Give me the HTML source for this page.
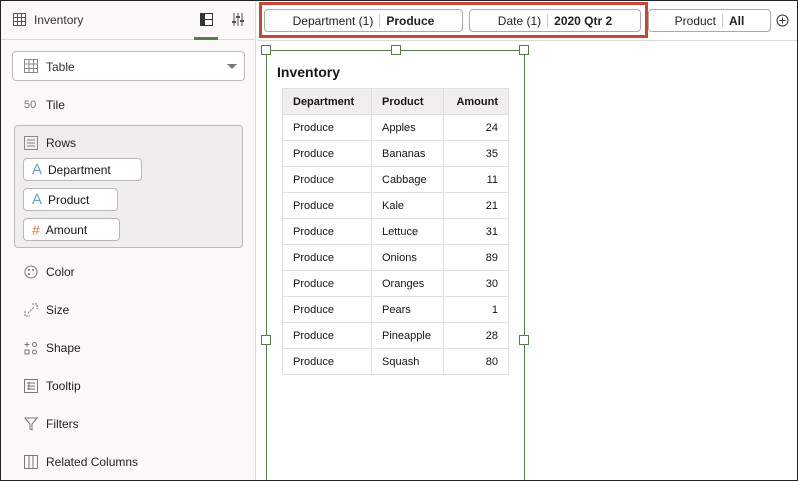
<!DOCTYPE html>
<html><head><style>
*{margin:0;padding:0;box-sizing:border-box}
body{width:798px;height:481px;overflow:hidden;font-family:"Liberation Sans",sans-serif;font-size:12px;color:#161513;background:#fff;position:relative}
.frame{position:absolute;left:0;top:0;width:798px;height:481px;border:1px solid #222;z-index:50;pointer-events:none}
.left{position:absolute;left:0;top:0;width:256px;height:481px;background:#fbf9f8;border-right:1px solid #dcdad8}
.a{position:absolute}
.hdr{position:absolute;left:0;top:0;width:256px;height:40px;border-bottom:1px solid #dcdad8}
.item{position:absolute;left:24px;display:flex;align-items:center;gap:8px;font-size:12px;color:#222}
.pill{position:absolute;height:23px;border:1px solid #b9b7b5;border-radius:4px;background:#fff;display:flex;align-items:center;padding-left:8px;gap:6px;font-size:12px}
.fp{position:absolute;top:9px;height:23px;border:1px solid #aaa;border-radius:4px;background:#fff;display:flex;align-items:center;justify-content:center;font-size:12px;color:#222}
.fp b{font-weight:bold}
.sep{display:inline-block;width:1px;height:13px;background:#ccc;margin:0 6px}
table{border-collapse:collapse;position:absolute;left:282px;top:88px;font-size:11px}
td,th{border:1px solid #e2e0de;height:26px;padding:0 10px;text-align:left}
th{background:#f1efed;font-weight:bold;height:26px}
td.n,th.n{text-align:right}
.h{position:absolute;width:10px;height:10px;border:1px solid #5b7a4a;background:#fff}
</style></head><body>
<div class="left">
 <div class="hdr">
  <svg class="a" style="left:13px;top:13px" width="13" height="13"><rect x=".5" y=".5" width="12" height="12" fill="none" stroke="#555"/><path d="M0 4.5H13M0 8.5H13M4.5 0V13M8.5 0V13" stroke="#555"/></svg>
  <div class="a" style="left:34px;top:13px;font-size:12px;color:#333">Inventory</div>
  <svg class="a" style="left:200px;top:13px" width="13" height="13"><rect x=".5" y=".5" width="12" height="12" fill="none" stroke="#333"/><path d="M4.5 0V13M4.5 6.5H13" stroke="#333"/><rect x="1" y="1" width="3" height="11" fill="#333"/></svg>
  <div class="a" style="left:194px;top:37px;width:24px;height:3px;background:#5b7a4a"></div>
  <svg class="a" style="left:232px;top:13px" width="12" height="13"><path d="M2 0V13M6 0V13M10 0V13" stroke="#555"/><path d="M0 9H4M4 4H8M8 8H12" stroke="#555" stroke-width="2"/></svg>
 </div>
 <div class="a" style="left:12px;top:51px;width:233px;height:30px;border:1px solid #bbb;border-radius:4px;background:#fff"></div>
 <svg class="a" style="left:24px;top:59px" width="14" height="14"><rect x=".5" y=".5" width="13" height="13" fill="none" stroke="#888"/><path d="M0 5H14M0 9.5H14M5 0V14M9.5 0V14" stroke="#888"/></svg>
 <div class="a" style="left:46px;top:60px;font-size:12px;color:#333">Table</div>
 <div class="a" style="left:227px;top:64px;border-left:5px solid transparent;border-right:5px solid transparent;border-top:5px solid #777"></div>
 <div class="item" style="top:98px"><span style="font-size:11px;color:#777;width:14px">50</span>Tile</div>
 <div class="a" style="left:14px;top:125px;width:229px;height:123px;border:1px solid #bbb;border-radius:4px;background:#efeeed"></div>
 <div class="item" style="top:136px"><svg width="14" height="14"><rect x=".5" y=".5" width="13" height="13" fill="none" stroke="#888"/><path d="M3 4H11M3 7H11M3 10H11" stroke="#888"/></svg>Rows</div>
 <div class="pill" style="left:23px;top:158px;width:119px"><span style="color:#6a9ec0;font-size:15px">A</span>Department</div>
 <div class="pill" style="left:23px;top:188px;width:95px"><span style="color:#6a9ec0;font-size:15px">A</span>Product</div>
 <div class="pill" style="left:23px;top:218px;width:97px"><span style="color:#d47a5c;font-size:14px">#</span>Amount</div>
 <div class="item" style="top:265px"><svg width="14" height="14"><circle cx="7" cy="7" r="6" fill="none" stroke="#777"/><circle cx="5" cy="5" r="1" fill="#777"/><circle cx="9" cy="5" r="1" fill="#777"/><circle cx="5" cy="9" r="1" fill="#777"/></svg>Color</div>
 <div class="item" style="top:303px"><svg width="14" height="14"><path d="M1 8V13H6M8 1H13V6M4 10L10 4" fill="none" stroke="#777" stroke-dasharray="2 1"/></svg>Size</div>
 <div class="item" style="top:341px"><svg width="14" height="14"><path d="M3 1V6M0.5 3.5H5.5" stroke="#777"/><circle cx="10.5" cy="3.5" r="2" fill="none" stroke="#777"/><rect x="1" y="9" width="4" height="4" fill="none" stroke="#777"/><circle cx="10.5" cy="11" r="2" fill="none" stroke="#777"/></svg>Shape</div>
 <div class="item" style="top:379px"><svg width="14" height="14"><rect x=".5" y=".5" width="13" height="13" fill="none" stroke="#777"/><path d="M3 4H11M3 7H11M3 10H11M5 3V11" stroke="#777"/></svg>Tooltip</div>
 <div class="item" style="top:417px"><svg width="14" height="14"><path d="M1 1H13L8 7V13L6 12V7Z" fill="none" stroke="#777"/></svg>Filters</div>
 <div class="item" style="top:455px"><svg width="14" height="14"><rect x=".5" y=".5" width="13" height="13" fill="none" stroke="#777"/><path d="M5 0V14M9 0V14" stroke="#777"/></svg>Related Columns</div>
</div>
<div class="a" style="left:257px;top:40px;width:541px;height:1px;background:#dcdad8"></div>
<div class="a" style="left:259px;top:2px;width:389px;height:36px;border:3px solid #c74634"></div>
<div class="fp" style="left:264px;width:199px">Department (1)<span class="sep"></span><b>Produce</b></div>
<div class="fp" style="left:469px;width:172px">Date (1)<span class="sep"></span><b>2020 Qtr 2</b></div>
<div class="fp" style="left:648px;width:123px">Product<span class="sep"></span><b>All</b></div>
<svg class="a" style="left:776px;top:14px" width="13" height="13"><circle cx="6.5" cy="6.5" r="5.5" fill="none" stroke="#333"/><path d="M6.5 3.5V9.5M3.5 6.5H9.5" stroke="#333"/></svg>
<div class="a" style="left:266px;top:50px;width:259px;height:431px;border:1px solid #5b7a4a;border-bottom:none"></div>
<div class="h" style="left:261px;top:45px"></div><div class="h" style="left:391px;top:45px"></div><div class="h" style="left:519px;top:45px"></div>
<div class="h" style="left:261px;top:335px"></div><div class="h" style="left:519px;top:335px"></div>
<div class="a" style="left:277px;top:64px;font-size:14px;font-weight:bold">Inventory</div>
<table>
<tr><th style="width:89px">Department</th><th style="width:72px">Product</th><th class="n" style="width:65px">Amount</th></tr>
<tr><td>Produce</td><td>Apples</td><td class="n">24</td></tr>
<tr><td>Produce</td><td>Bananas</td><td class="n">35</td></tr>
<tr><td>Produce</td><td>Cabbage</td><td class="n">11</td></tr>
<tr><td>Produce</td><td>Kale</td><td class="n">21</td></tr>
<tr><td>Produce</td><td>Lettuce</td><td class="n">31</td></tr>
<tr><td>Produce</td><td>Onions</td><td class="n">89</td></tr>
<tr><td>Produce</td><td>Oranges</td><td class="n">30</td></tr>
<tr><td>Produce</td><td>Pears</td><td class="n">1</td></tr>
<tr><td>Produce</td><td>Pineapple</td><td class="n">28</td></tr>
<tr><td>Produce</td><td>Squash</td><td class="n">80</td></tr>
</table>
<div class="frame"></div>
</body></html>
